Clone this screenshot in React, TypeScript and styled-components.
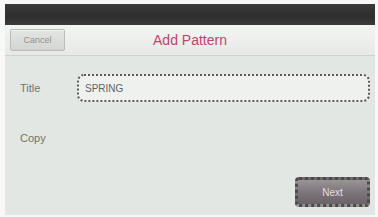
import { createGlobalStyle } from "styled-components";
import styled from "styled-components";

const GlobalStyle = createGlobalStyle`
  html, body {
    margin: 0;
    padding: 0;
    background: #f7f8f7;
  }
  body {
    font-family: "Liberation Sans", Arial, sans-serif;
  }
`;

const Screen = styled.div`
  width: 378px;
  height: 217px;
  box-sizing: border-box;
  padding: 4px 3px 2px 5px;
  display: flex;
  flex-direction: column;
`;

const StatusBar = styled.div`
  height: 21px;
  background: linear-gradient(180deg, #3a3a3a 0%, #2e2e2e 60%, #3c3c3c 100%);
  flex-shrink: 0;
`;

const Header = styled.div`
  height: 30px;
  flex-shrink: 0;
  display: flex;
  align-items: center;
  position: relative;
  padding-left: 5px;
  background: linear-gradient(180deg, #f3f5f3 0%, #e6e9e6 100%);
  border-bottom: 1px solid #cfd3cf;
`;

const CancelButton = styled.button`
  width: 55px;
  height: 22px;
  padding: 0;
  border: 1px solid #b9bdb9;
  border-radius: 2px;
  background: linear-gradient(180deg, #e2e5e2 0%, #d3d6d3 100%);
  box-shadow: inset 0 1px 0 #f2f4f2;
  color: #8f948f;
  font-family: "Liberation Sans", Arial, sans-serif;
  font-size: 9px;
`;

const HeaderTitle = styled.div`
  position: absolute;
  left: 0;
  right: 0;
  text-align: center;
  color: #c2446e;
  font-size: 14px;
  pointer-events: none;
`;

const Body = styled.div`
  flex: 1;
  background: #e3e7e3;
  display: flex;
  flex-direction: column;
  padding: 17px 5px 8px 15px;
`;

const FieldRow = styled.div<{ $height: number }>`
  display: flex;
  align-items: center;
  height: ${(p) => p.$height}px;
`;

const Label = styled.div`
  width: 57px;
  color: #6f746f;
  font-size: 11px;
`;

const Input = styled.div`
  flex: 1;
  height: 28px;
  box-sizing: border-box;
  border: 2px dotted #5a5d5a;
  border-radius: 7px;
  background: #eef1ee;
  display: flex;
  align-items: center;
  padding-left: 6px;
  color: #5f645f;
  font-size: 10px;
`;

const Footer = styled.div`
  flex: 1;
  display: flex;
  justify-content: flex-end;
  align-items: flex-end;
`;

const NextButton = styled.button`
  width: 75px;
  height: 30px;
  padding: 0;
  border: 3px dotted #4a4a4a;
  border-radius: 4px;
  background: linear-gradient(180deg, #9a9497 0%, #7a7478 55%, #6a6468 100%);
  color: #e6dde3;
  font-family: "Liberation Sans", Arial, sans-serif;
  font-size: 10px;
`;

export default function App() {
  return (
    <>
      <GlobalStyle />
      <Screen>
        <StatusBar />
        <Header>
          <CancelButton>Cancel</CancelButton>
          <HeaderTitle>Add Pattern</HeaderTitle>
        </Header>
        <Body>
          <FieldRow $height={30}>
            <Label>Title</Label>
            <Input>SPRING</Input>
          </FieldRow>
          <FieldRow $height={70}>
            <Label>Copy</Label>
          </FieldRow>
          <Footer>
            <NextButton>Next</NextButton>
          </Footer>
        </Body>
      </Screen>
    </>
  );
}
